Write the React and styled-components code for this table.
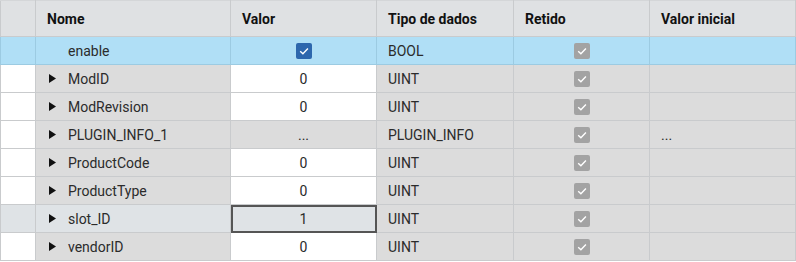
import React from "react";
import styled, { createGlobalStyle } from "styled-components";

const GlobalStyle = createGlobalStyle`
  body {
    margin: 0;
    background: #ffffff;
    font-family: Roboto, "Liberation Sans", sans-serif;
  }
`;

const Table = styled.table`
  width: 795px;
  border-collapse: collapse;
  table-layout: fixed;
  font-size: 14px;
  color: #2b2b2b;
`;

const HeadCell = styled.th`
  height: 35px;
  padding: 0 0 0 11px;
  text-align: left;
  font-weight: 700;
  font-size: 14px;
  color: #111;
  background: #dfe1e3;
  border: 1px solid #c9cbcd;
  border-top: 1px solid #d4d6d8;
`;

const Row = styled.tr`
  height: 28px;
`;

const bgFor = ({ $tone }) =>
  $tone === "blue"
    ? "#b0dff6"
    : $tone === "white"
    ? "#ffffff"
    : $tone === "focus"
    ? "#dfe3e6"
    : "#dcdcdc";

const Cell = styled.td`
  padding: 0 0 0 11px;
  background: ${bgFor};
  border: 1px solid ${({ $tone }) => ($tone === "blue" ? "#9ccbe2" : "#c9cbcd")};
  text-align: left;
  white-space: nowrap;
  overflow: hidden;
`;

const CenterCell = styled(Cell)`
  padding: 0;
  text-align: center;
`;

const ValueCell = styled(CenterCell)`
  ${({ $focused }) =>
    $focused &&
    `outline: 2px solid #555; outline-offset: -2px;`}
`;

const NameCell = styled(Cell)`
  padding-left: 12px;
`;

const NameInner = styled.div`
  display: flex;
  align-items: center;
  gap: 12px;
`;

const Arrow = styled.span`
  width: 8px;
  display: inline-flex;
  justify-content: center;
`;

const Box = styled.span`
  display: inline-flex;
  align-items: center;
  justify-content: center;
  width: 16px;
  height: 16px;
  border-radius: 2px;
  background: ${({ $blue }) => ($blue ? "#2d67ad" : "#a3a3a3")};
  vertical-align: middle;
`;

const Check = ({ blue }) => (
  <Box $blue={blue}>
    <svg width="12" height="12" viewBox="0 0 12 12">
      <path d="M2.2 6.2 L4.9 8.7 L9.9 3.4" fill="none" stroke="#fff" strokeWidth="1.4" />
    </svg>
  </Box>
);

const Triangle = () => (
  <svg width="7" height="9" viewBox="0 0 7 9">
    <path d="M0 0 L7 4.5 L0 9 Z" fill="#111" />
  </svg>
);

const rows = [
  { name: "enable", value: "check", type: "BOOL", tone: "blue", leaf: true },
  { name: "ModID", value: "0", type: "UINT" },
  { name: "ModRevision", value: "0", type: "UINT" },
  { name: "PLUGIN_INFO_1", value: "...", type: "PLUGIN_INFO", init: "...", greyValue: true },
  { name: "ProductCode", value: "0", type: "UINT" },
  { name: "ProductType", value: "0", type: "UINT" },
  { name: "slot_ID", value: "1", type: "UINT", focus: true },
  { name: "vendorID", value: "0", type: "UINT" },
];

export default function App() {
  return (
    <>
      <GlobalStyle />
      <Table>
        <colgroup>
          <col style={{ width: 35 }} />
          <col style={{ width: 195 }} />
          <col style={{ width: 146 }} />
          <col style={{ width: 137 }} />
          <col style={{ width: 136 }} />
          <col style={{ width: 146 }} />
        </colgroup>
        <thead>
          <tr>
            <HeadCell />
            <HeadCell>Nome</HeadCell>
            <HeadCell>Valor</HeadCell>
            <HeadCell>Tipo de dados</HeadCell>
            <HeadCell>Retido</HeadCell>
            <HeadCell>Valor inicial</HeadCell>
          </tr>
        </thead>
        <tbody>
          {rows.map((r) => {
            const tone = r.tone || "grey";
            const lead = r.tone === "blue" ? "blue" : r.focus ? "focus" : "white";
            const valueTone =
              r.tone === "blue" ? "blue" : r.focus ? "focus" : r.greyValue ? "grey" : "white";
            return (
              <Row key={r.name}>
                <Cell $tone={lead} />
                <NameCell $tone={r.focus ? "focus" : tone}>
                  <NameInner>
                    <Arrow>{!r.leaf && <Triangle />}</Arrow>
                    {r.name}
                  </NameInner>
                </NameCell>
                <ValueCell $tone={valueTone} $focused={r.focus}>
                  {r.value === "check" ? <Check blue /> : r.value}
                </ValueCell>
                <Cell $tone={tone}>{r.type}</Cell>
                <CenterCell $tone={tone}>
                  <Check />
                </CenterCell>
                <Cell $tone={tone}>{r.init || ""}</Cell>
              </Row>
            );
          })}
        </tbody>
      </Table>
    </>
  );
}
